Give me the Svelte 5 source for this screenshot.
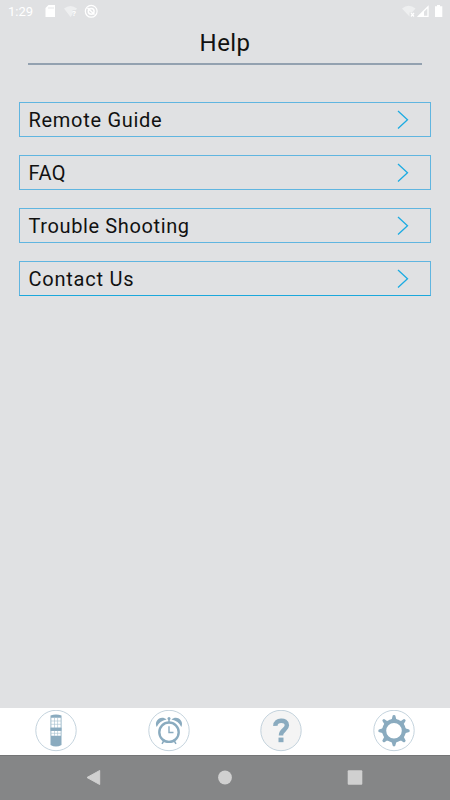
<script>
    const items = [
        { label: 'Remote Guide', spacing: 0.7 },
        { label: 'FAQ', spacing: 0.5 },
        { label: 'Trouble Shooting', spacing: 0.62 },
        { label: 'Contact Us', spacing: 0.76 }
    ];

    const tabs = ['remote', 'alarm', 'help', 'settings'];
    const teeth = [0, 45, 90, 135, 180, 225, 270, 315];

    let active = 'help';
</script>

<div class="screen">
    <div class="status">
        <span class="time">1:29</span>
        <svg class="left" width="60" height="24" viewBox="42 0 60 24">
            <path d="M48.5 5H55v12h-9.5V8z" fill="#fff" />
            <path d="M49 7v2M51 7v2M53 7v2" stroke="#e0e1e3" stroke-width=".8" />
            <path d="M64 8.5Q70.5 3.5 77 8.5L76 10H72.5v4.5L70.5 17z" fill="#eeeff0" />
            <text x="72" y="16" font-size="8" font-weight="bold" fill="#fff">?</text>
            <circle cx="91.2" cy="11.3" r="5.9" fill="none" stroke="#fff" stroke-width="1.2" />
            <circle cx="91.2" cy="11.3" r="2.9" fill="none" stroke="#fff" stroke-width="1.5" />
            <path d="M87.5 8l7 6.5" stroke="#fff" stroke-width="1.6" />
        </svg>
        <svg class="right" width="50" height="24" viewBox="400 0 50 24">
            <path d="M402 8.5Q408.5 3 415.5 8.5L412 12.5h-2.5v4z" fill="#eeeff0" />
            <path d="M411 13l3 3.5M414 13l-3 3.5" stroke="#fff" stroke-width="1.2" />
            <path d="M418.5 16.3L428 6.8v9.5z" fill="none" stroke="#fff" stroke-width="1.3" />
            <path d="M418 16.5l6-6v6z" fill="#fff" />
            <path d="M437 5h3v1.2h2.3V17H435V6.2h2z" fill="#fff" />
        </svg>
    </div>

    <header>
        <h1>Help</h1>
    </header>

    <main>
        {#each items as item}
            <button class="row">
                <span style="letter-spacing: {item.spacing}px">{item.label}</span>
                <svg width="12" height="20" viewBox="0 0 12 20">
                    <path d="M1 1l9.5 8.7L1 18.5" fill="none" stroke="#1cabe2" stroke-width="1.3" />
                </svg>
            </button>
        {/each}
    </main>

    <nav class="tabs">
        {#each tabs as tab}
            <button class="tab" class:active={tab === active} aria-label={tab}>
                <svg width="42" height="42" viewBox="0 0 42 42">
                    <circle class="ring" cx="21" cy="20.5" r="20.2" />
                    {#if tab === 'remote'}
                        <path d="M15.5 5.5q5.5-2 11 0V35q-5.5 3-11 0z" fill="#8aabbf" />
                        <path d="M16.3 7.8h9.4v9.9h-9.4zM16.3 20.8h9.4v5h-9.4z" fill="#fff" />
                        <path d="M19.5 7.8v18M22.6 7.8v18M16 11h10M16 14.3h10M16 23.3h10" stroke="#a5bfce" stroke-width=".6" />
                        <path d="M15.5 17.7h11v3.1h-11z" fill="#8aabbf" />
                    {:else if tab === 'alarm'}
                        <circle cx="21" cy="22.2" r="9.7" fill="none" stroke="#8aabbf" stroke-width="2.4" />
                        <path d="M8.7 17C5.5 11 13 4.5 18.6 9.6Q11.5 11 8.7 17zM33.3 17C36.5 11 29 4.5 23.4 9.6Q30.5 11 33.3 17z" fill="#8aabbf" />
                        <circle cx="21" cy="8.6" r="1.5" fill="#8aabbf" />
                        <path d="M21 9v4M15.7 31L14 33.8M26.3 31L28 33.8" stroke="#8aabbf" stroke-width="1.5" />
                        <path d="M21 16.2v6.3h4.5" fill="none" stroke="#8aabbf" stroke-width="1.4" />
                    {:else if tab === 'help'}
                        <path d="M15.4 15.8C15 9.3 26.9 8.7 26.9 15.3C26.9 19.8 21 19.8 21 25.5" fill="none" stroke="#8aabbf" stroke-width="4.5" />
                        <path d="M18.5 27.6h5v4.6h-5z" fill="#8aabbf" />
                    {:else}
                        <circle cx="21" cy="20.7" r="9.8" fill="none" stroke="#8aabbf" stroke-width="4" />
                        {#each teeth as angle}
                            <path d="M17.3 10.5Q19.3 9.5 19.5 6.3Q19.5 5 21 5T22.5 6.3Q22.7 9.5 24.7 10.5z" fill="#8aabbf" transform="rotate({angle} 21 20.7)" />
                        {/each}
                    {/if}
                </svg>
            </button>
        {/each}
    </nav>

    <div class="system">
        <svg width="16" height="18" viewBox="0 0 16 18">
            <path d="M1 8.5L13.7 1.5v14z" fill="#d0d0d0" stroke="#d0d0d0" stroke-linejoin="round" />
        </svg>
        <svg width="16" height="18" viewBox="0 0 16 18">
            <circle cx="8" cy="8.5" r="6.9" fill="#d0d0d0" />
        </svg>
        <svg width="16" height="18" viewBox="0 0 16 18">
            <rect x=".7" y="1.2" width="14.6" height="14.6" rx="1" fill="#d0d0d0" />
        </svg>
    </div>
</div>

<style>
    :global(body) {
        margin: 0;
    }

    .screen {
        width: 450px;
        height: 800px;
        display: flex;
        flex-direction: column;
        background: #e0e1e3;
        font-family: Roboto, "Liberation Sans", sans-serif;
        color: #111;
        overflow: hidden;
    }

    .status {
        height: 24px;
        display: flex;
        align-items: center;
        color: #fff;
    }

    .time {
        width: 34px;
        padding-left: 8px;
        font-size: 13px;
        line-height: 24px;
    }

    .right {
        margin-left: auto;
    }

    header {
        height: 39px;
        margin: 0 28px;
        border-bottom: 2px solid #93a1b0;
        text-align: center;
    }

    h1 {
        margin: 0;
        font-size: 24px;
        line-height: 38px;
        font-weight: 400;
        letter-spacing: 0.4px;
    }

    main {
        flex: 1;
        display: flex;
        flex-direction: column;
        gap: 18px;
        padding: 37px 19px 0;
    }

    button {
        border: 0;
        background: none;
        padding: 0;
        font: inherit;
        color: inherit;
    }

    .row {
        box-sizing: border-box;
        height: 35px;
        display: flex;
        align-items: center;
        justify-content: space-between;
        padding: 0 21px 0 8.5px;
        border: 1px solid #60b5e0;
        font-size: 20px;
    }

    .row:last-child {
        border-bottom-color: #1ca8dc;
    }

    .row svg {
        display: block;
    }

    .tabs {
        box-sizing: border-box;
        height: 47px;
        padding-top: 2px;
        display: flex;
        justify-content: space-around;
        align-items: flex-start;
        background: #fff;
    }

    .tab svg {
        display: block;
    }

    .ring {
        fill: #fff;
        stroke: #b5c8d4;
        stroke-width: 0.8;
    }

    .active .ring {
        fill: #f4f4f4;
    }

    .system {
        box-sizing: border-box;
        height: 45px;
        display: flex;
        justify-content: space-between;
        align-items: center;
        padding: 0 87px 0 86px;
        background: #858687;
        border-top: 1px solid #747576;
    }
</style>
